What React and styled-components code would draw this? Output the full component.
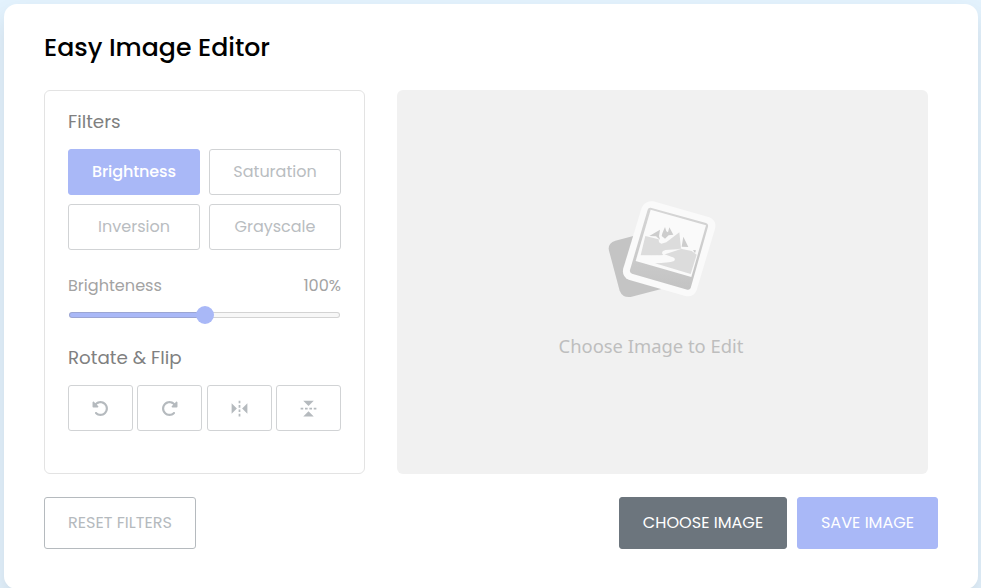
import React, { useState } from 'react';
import styled, { createGlobalStyle } from 'styled-components';
import { FaRotateLeft, FaRotateRight } from 'react-icons/fa6';
import { BiReflectVertical, BiReflectHorizontal } from 'react-icons/bi';

const GlobalStyle = createGlobalStyle`
  *, *::before, *::after { box-sizing: border-box; margin: 0; padding: 0; }
  body {
    background: #e3f2fd;
    font-family: Poppins, Inter, sans-serif;
    overflow: hidden;
  }
  button, input { font-family: inherit; }
`;

const Page = styled.main`
  height: 588px;
  padding: 4px 3px 0 4px;
`;

const Card = styled.section`
  height: 585px;
  padding: 25px 40px 0;
  background: #fff;
  border-radius: 13px;
  box-shadow: 0 12px 23px rgba(0, 0, 0, 0.1);
`;

const Title = styled.h1`
  height: 38px;
  font-size: 25.2px;
  font-weight: 500;
  line-height: 38px;
  color: #000;
`;

const Workspace = styled.div`
  display: flex;
  gap: 32px;
  height: 384px;
  margin-top: 23px;
`;

const Panel = styled.aside`
  width: 321px;
  padding: 17px 23px 0;
  border: 1px solid #e3e3e3;
  border-radius: 6px;
`;

const GroupTitle = styled.h2`
  height: 27px;
  margin-bottom: 14px;
  font-size: 18.3px;
  font-weight: 400;
  line-height: 27px;
  color: #808080;
`;

const FilterGrid = styled.div`
  display: grid;
  grid-template-columns: 132px 132px;
  gap: 9px;
`;

const OptionButton = styled.button`
  height: 46px;
  padding-bottom: 2px;
  border: 1px solid ${(p) => (p.$active ? '#a9b8f7' : '#d1d3d5')};
  border-radius: 3px;
  background: ${(p) => (p.$active ? '#a9b8f7' : '#fff')};
  color: ${(p) => (p.$active ? '#fff' : '#b9bdc1')};
  font-size: 16px;
  font-weight: ${(p) => (p.$active ? 500 : 400)};
  letter-spacing: ${(p) => (p.$active ? '-0.1px' : '0')};
`;

const IconButton = styled(OptionButton)`
  display: flex;
  align-items: center;
  justify-content: center;
  width: 65px;
  padding: 0;
  color: #b5babe;
  font-size: ${(p) => p.$size}px;
`;

const SliderBlock = styled.div`
  display: flex;
  flex-direction: column;
  margin: 24px 0 26px;
`;

const SliderInfo = styled.div`
  display: flex;
  justify-content: space-between;
  height: 24px;
  font-size: 16.1px;
  line-height: 24px;
  color: #a3a3a3;
`;

const Slider = styled.input`
  appearance: none;
  width: 271px;
  height: 6px;
  margin: 14px 1px 0;
  border: 1px solid rgba(120, 120, 120, 0.28);
  border-radius: 3px;
  background: linear-gradient(to right, #a9b8f7 50%, #f7f7f7 50%) border-box;

  &::-webkit-slider-thumb {
    appearance: none;
    width: 18px;
    height: 18px;
    border-radius: 50%;
    background: #a9b8f7;
  }
`;

const RotateRow = styled.div`
  display: flex;
  justify-content: space-between;
`;

const Preview = styled.div`
  display: flex;
  flex-direction: column;
  align-items: center;
  width: 531px;
  padding: 110px 23px 0 0;
  border-radius: 6px;
  background: #f1f1f1;
`;

const Placeholder = styled.svg`
  width: 108px;
  height: 98px;
  margin-left: 22px;
`;

const PreviewText = styled.span`
  margin-top: 35px;
  font-family: 'Noto Sans', sans-serif;
  font-size: 18.4px;
  line-height: 26px;
  white-space: nowrap;
  color: #bebebe;
`;

const Controls = styled.div`
  display: flex;
  justify-content: space-between;
  margin-top: 23px;
`;

const ControlGroup = styled.div`
  display: flex;
  gap: 10px;
`;

const ControlButton = styled.button`
  width: ${(p) => p.$width}px;
  height: 52px;
  padding-bottom: 2px;
  border: 1px solid ${(p) => p.$border || p.$fill};
  border-radius: 3px;
  background: ${(p) => p.$fill};
  color: ${(p) => p.$color || '#fff'};
  font-size: 16.1px;
  text-transform: uppercase;
`;

const filters = ['Brightness', 'Saturation', 'Inversion', 'Grayscale'];

const transforms = [
  { label: 'Rotate left', Icon: FaRotateLeft, size: 17 },
  { label: 'Rotate right', Icon: FaRotateRight, size: 17 },
  { label: 'Flip horizontally', Icon: BiReflectVertical, size: 21 },
  { label: 'Flip vertically', Icon: BiReflectHorizontal, size: 21 },
];

function PhotoPlaceholder() {
  return (
    <Placeholder viewBox="54 30 324 294" aria-hidden="true">
      <defs>
        <linearGradient id="frame" x1="0" y1="0" x2="0" y2="1">
          <stop offset="0" stopColor="#d6d6d6" />
          <stop offset="1" stopColor="#c3c3c3" />
        </linearGradient>
      </defs>
      <path d="M130 138 L76 152 Q52 160 57 182 L89 302 Q98 324 122 321 L214 297 Z" fill="#c4c4c4" />
      <path d="M190 34 L358 82 Q381 92 375 116 L320 300 Q311 323 286 318 L116 269 Q94 258 100 235 L155 53 Q166 30 190 34 Z" fill="#fafafa" />
      <path d="M182 53 L348 99 Q356 102 354 110 L302 294 Q299 301 292 299 L126 251 Q118 248 120 240 L173 59 Q175 52 182 53 Z" fill="url(#frame)" />
      <path d="M182 59 L348 106 L304 261 L137 213 Z" fill="#fafafa" />
      <path d="M166 138 L206 148 L207 157 L214 161 L229 157 L268 127 L273 175 Q245 177 224 180 Q215 184 219 191 L252 203 Q257 207 252 213 Q235 219 195 220 L302 252 L320 194 L305 183 L276 177 L272 175 Q244 177 224 180 Q214 184 219 191 L221 197 L152 196 Z" fill="#dcdcdc" />
      <path d="M273 177 L226 180 Q211 185 219 194 L250 204 Q256 208 246 213 Q220 219 152 209 L152 197 L216 196 Z" fill="#fafafa" />
      <path d="M178 138 L210 119 L207 138 L210 149 L198 139 Z M217 130 L225 111 L229 124 L234 127 L238 112 L250 134 L236 136 L225 146 L215 138 Z M280 140 L295 171 L275 170 Z M309 180 L318 181 L315 190 Z" fill="#cdcdcd" />
    </Placeholder>
  );
}

export default function App() {
  const [value, setValue] = useState(100);

  return (
    <>
      <GlobalStyle />
      <Page>
        <Card>
          <Title>Easy Image Editor</Title>
          <Workspace>
            <Panel>
              <GroupTitle>Filters</GroupTitle>
              <FilterGrid>
                {filters.map((name, i) => (
                  <OptionButton key={name} $active={i === 0}>{name}</OptionButton>
                ))}
              </FilterGrid>
              <SliderBlock>
                <SliderInfo>
                  <span>Brighteness</span>
                  <span>{value}%</span>
                </SliderInfo>
                <Slider type="range" min="0" max="200" value={value} onChange={(e) => setValue(e.target.value)} />
              </SliderBlock>
              <GroupTitle>Rotate &amp; Flip</GroupTitle>
              <RotateRow>
                {transforms.map(({ label, Icon, size }) => (
                  <IconButton key={label} aria-label={label} $size={size}><Icon /></IconButton>
                ))}
              </RotateRow>
            </Panel>
            <Preview>
              <PhotoPlaceholder />
              <PreviewText>Choose Image to Edit</PreviewText>
            </Preview>
          </Workspace>
          <Controls>
            <ControlButton $width={152} $fill="#fff" $border="#b5babe" $color="#b5babe">Reset Filters</ControlButton>
            <ControlGroup>
              <ControlButton $width={168} $fill="#6c757d">Choose Image</ControlButton>
              <ControlButton $width={141} $fill="#a9b8f7">Save Image</ControlButton>
            </ControlGroup>
          </Controls>
        </Card>
      </Page>
    </>
  );
}
